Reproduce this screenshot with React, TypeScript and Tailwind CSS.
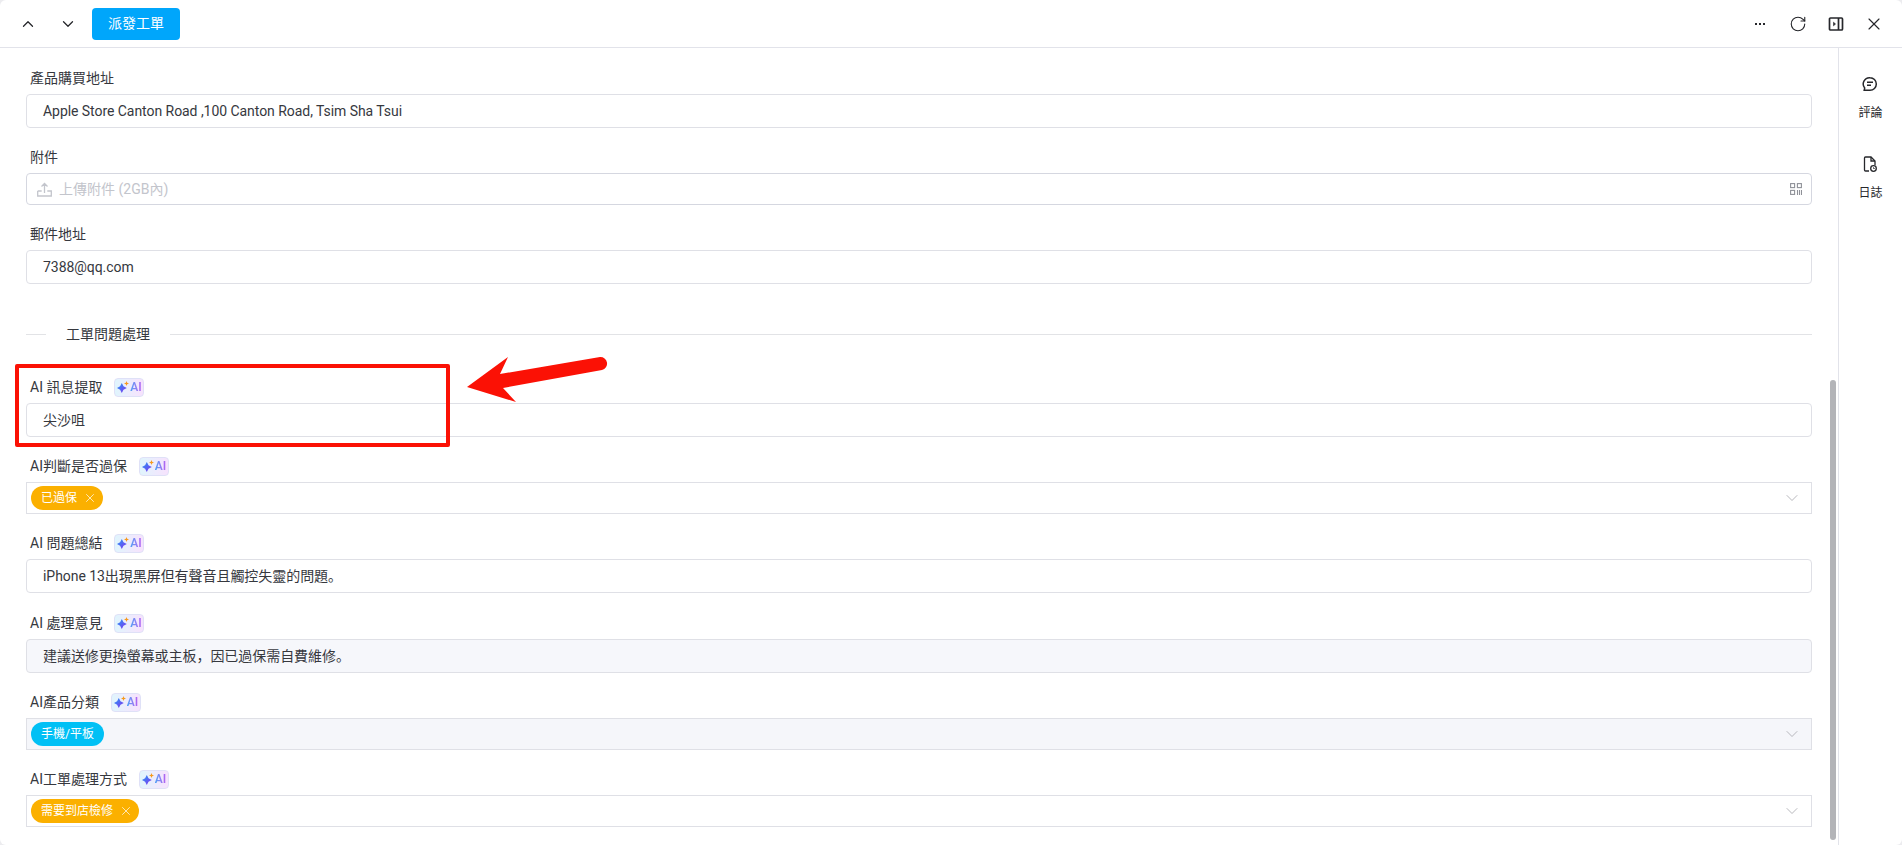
import { RotateCw, X, ChevronUp, ChevronDown } from 'lucide-react';
import type { ReactNode } from 'react';

function AiBadge() {
  return (
    <span className="inline-flex h-[19px] w-[30px] items-center justify-center gap-[1px] rounded-[4px] border border-[#dfe1f7] bg-gradient-to-r from-[#e0f5fd] to-[#f7e2fd]">
      <svg width="12" height="12" viewBox="0 0 12 12">
        <defs>
          <linearGradient id="spark" x1="0" y1="0" x2="1" y2="1">
            <stop offset="0" stopColor="#1f9df5" />
            <stop offset="1" stopColor="#8a2ff0" />
          </linearGradient>
        </defs>
        <path d="M4.800 2 6.500 5.300 9.800 7 6.500 8.700 4.800 12 3.100 8.700-.2 7 3.100 5.300Z" fill="url(#spark)" />
        <path d="M9.500 0 10.200 1.800 12 2.500 10.200 3.200 9.500 5 8.800 3.200 7 2.500 8.800 1.800Z" fill="#f79a1f" />
      </svg>
      <span className="bg-gradient-to-r from-[#3f9ff5] to-[#b45cf2] bg-clip-text text-[12px] font-semibold leading-none text-transparent">AI</span>
    </span>
  );
}

function Field({ label, ai, className = 'mb-[16px]', children }: { label: string; ai?: boolean; className?: string; children: ReactNode }) {
  return (
    <div className={className}>
      <div className="mb-[3px] flex h-[26px] items-center gap-[12px] pl-[4px] text-[14px] text-[#36383e]">
        <span>{label}</span>
        {ai && <AiBadge />}
      </div>
      {children}
    </div>
  );
}

function TextBox({ value, gray }: { value: string; gray?: boolean }) {
  return (
    <div className={`flex h-[34px] items-center rounded-[4px] border border-[#dfe0e6] px-[16px] text-[14px] tracking-[-0.05px] text-[#36383e] ${gray ? 'bg-[#f6f7fb]' : 'bg-white'}`}>
      {value}
    </div>
  );
}

function SelectBox({ tag, color, gray, closable = true }: { tag: string; color: string; gray?: boolean; closable?: boolean }) {
  return (
    <div className={`flex h-[32px] items-center justify-between border border-[#dfe0e6] pl-[4px] pr-[9px] ${gray ? 'bg-[#f5f6fa]' : 'bg-white'}`}>
      <span className={`flex h-[24px] items-center gap-[6px] rounded-full text-[12px] text-white ${closable ? 'pl-[10px] pr-[6px]' : 'px-[10px]'} ${color}`}>
        {tag}
        {closable && <X size={14} strokeWidth={1.2} />}
      </span>
      <ChevronDown size={20} strokeWidth={1} className="text-[#a9aab0]" />
    </div>
  );
}

export default function App() {
  return (
    <div className="h-[845px] w-[1902px] bg-[#ececef]">
      <div className="relative flex h-full w-full flex-col overflow-hidden rounded-[6px] bg-white font-['Roboto','Noto_Sans_CJK_SC',sans-serif]">
        <header className="flex h-[48px] shrink-0 items-center justify-between border-b border-[#e2e3ea] pl-[8px] pr-[9px]">
          <div className="flex items-center">
            <span className="flex w-[40px] justify-center"><ChevronUp size={18} strokeWidth={1.7} className="text-[#26272b]" /></span>
            <span className="flex w-[40px] justify-center"><ChevronDown size={18} strokeWidth={1.7} className="text-[#26272b]" /></span>
            <button className="ml-[4px] h-[32px] w-[88px] rounded-[4px] bg-[#00a6fb] text-[14px] text-white">派發工單</button>
          </div>
          <div className="flex items-center text-[#26272b]">
            <span className="flex w-[38px] justify-center">
              <svg width="12" height="4" viewBox="0 0 12 4" fill="currentColor">
                <rect x="1" y="1" width="2" height="2" />
                <rect x="5" y="1" width="2" height="2" />
                <rect x="9" y="1" width="2" height="2" />
              </svg>
            </span>
            <span className="flex w-[38px] justify-center"><RotateCw size={18} strokeWidth={1.5} /></span>
            <span className="flex w-[38px] justify-center">
              <svg width="16" height="16" viewBox="0 0 16 16" fill="none" stroke="currentColor" strokeWidth="1.7">
                <rect x="1.500" y="2" width="13" height="12" rx="1" />
                <path d="M10.500 2v12" />
                <path d="M5.500 6.200 7.500 8 5.500 9.800Z" fill="currentColor" strokeWidth="0.6" />
              </svg>
            </span>
            <span className="flex w-[38px] justify-center"><X size={20} strokeWidth={1.4} /></span>
          </div>
        </header>

        <div className="flex min-h-0 flex-1">
          <main className="relative min-w-0 flex-1 overflow-hidden px-[26px] pt-[17px]">
            <Field label="產品購買地址">
              <TextBox value="Apple Store Canton Road ,100 Canton Road, Tsim Sha Tsui" />
            </Field>
            <Field label="附件">
              <div className="flex h-[32px] items-center justify-between rounded-[4px] border border-[#d5d7e0] pl-[10px] pr-[9px] text-[14px] text-[#c3c5cc]">
                <span className="flex items-center gap-[7px]">
                  <svg width="15" height="15" viewBox="0 0 15 15" fill="none" stroke="currentColor" strokeWidth="1.3">
                    <path d="M.7 9v5h13.600V9h-4M4.700 9h-4M7.500 11V1.500M4.500 4.500l3-3 3 3" />
                  </svg>
                  上傳附件 (2GB內)
                </span>
                <svg width="12" height="12" viewBox="0 0 12 12" fill="none" stroke="#8f9198" strokeWidth="1.1">
                  <rect x=".6" y=".6" width="4" height="4" />
                  <rect x="7.400" y=".6" width="4" height="4" />
                  <rect x=".6" y="7.400" width="4" height="4" />
                  <path d="M7.500 7v5M9.500 7v5M11.500 7v5" />
                </svg>
              </div>
            </Field>
            <Field label="郵件地址">
              <TextBox value="7388@qq.com" />
            </Field>

            <div className="mb-[30px] mt-[40px] flex h-[20px] items-center text-[14px] text-[#36383e]">
              <span className="h-px w-[20px] bg-[#e2e3e6]" />
              <span className="ml-[20px] mr-[20px]">工單問題處理</span>
              <span className="h-px flex-1 bg-[#e2e3e6]" />
            </div>

            <Field label="AI 訊息提取" ai>
              <TextBox value="尖沙咀" />
            </Field>
            <Field label="AI判斷是否過保" ai>
              <SelectBox tag="已過保" color="bg-[#fbb000]" />
            </Field>
            <Field label="AI 問題總結" ai className="mb-[17px]">
              <TextBox value="iPhone 13出現黑屏但有聲音且觸控失靈的問題。" />
            </Field>
            <Field label="AI 處理意見" ai>
              <TextBox value="建議送修更換螢幕或主板，因已過保需自費維修。" gray />
            </Field>
            <Field label="AI產品分類" ai>
              <SelectBox tag="手機/平板" color="bg-[#00c0f5]" gray closable={false} />
            </Field>
            <Field label="AI工單處理方式" ai>
              <SelectBox tag="需要到店檢修" color="bg-[#fbb000]" />
            </Field>

            {/* overlay scrollbar */}
            <div className="absolute right-[2px] top-[332px] h-[460px] w-[6px] rounded-full bg-[#b3b4b8]" />
          </main>

          <aside className="flex w-[64px] shrink-0 flex-col items-center gap-[35px] border-l border-[#e2e3ea] pt-[28px] text-[12px] leading-[16px] text-[#26272b]">
            <div className="flex flex-col items-center gap-[13px]">
              <svg width="16" height="16" viewBox="0 0 16 16" fill="none" stroke="currentColor" strokeWidth="1.5">
                <path d="M8 1.700a6.300 6.300 0 1 1 0 12.600H2.200l.5-2.300A6.300 6.300 0 0 1 8 1.700Z" />
                <path d="M5 6.300h6M5 9.300h4" />
              </svg>
              <span>評論</span>
            </div>
            <div className="flex flex-col items-center gap-[13px]">
              <svg width="16" height="16" viewBox="0 0 16 16" fill="none" stroke="currentColor" strokeWidth="1.3">
                <path d="M7 15H3.500a1 1 0 0 1-1-1V2a1 1 0 0 1 1-1H9l4 4v4" />
                <path d="M9 1v4h4" />
                <circle cx="11.500" cy="12.500" r="2.800" />
                <path d="M11.500 11.300v1.200h1.200" strokeWidth="0.9" />
              </svg>
              <span>日誌</span>
            </div>
          </aside>
        </div>

        {/* red annotation over the screenshot */}
        <div className="pointer-events-none absolute left-[15px] top-[364px] h-[83px] w-[435px] rounded-[2px] border-[4px] border-[#fb1105]" />
        <svg className="pointer-events-none absolute left-[460px] top-[350px]" width="155" height="60" viewBox="0 0 155 60">
          <path d="M7 37 48 7 40 24 140 7a6.600 6.600 0 0 1 2 13L43 38 56 52Z" fill="#fb1105" />
        </svg>
      </div>
    </div>
  );
}
